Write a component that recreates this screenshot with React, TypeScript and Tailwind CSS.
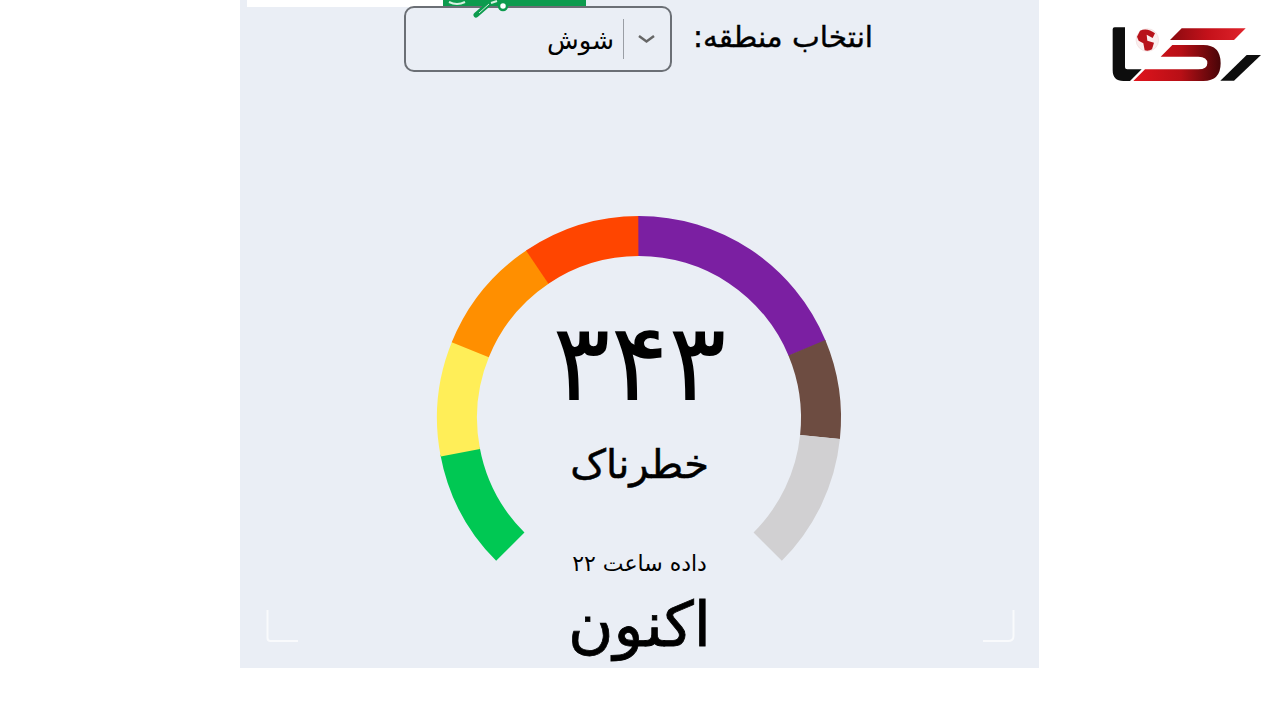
function polar(r: number, a: number) {
  const t = (a * Math.PI) / 180;
  return [639 - 430 + r * Math.sin(t), 418 - 210 - r * Math.cos(t)];
}
function seg(a0: number, a1: number) {
  const R = 202, r = 162;
  const [x0, y0] = polar(R, a0), [x1, y1] = polar(R, a1), [x2, y2] = polar(r, a1), [x3, y3] = polar(r, a0);
  return `M${x0} ${y0}A${R} ${R} 0 0 1 ${x1} ${y1}L${x2} ${y2}A${r} ${r} 0 0 0 ${x3} ${y3}Z`;
}
const segs: [number, number, string][] = [
  [-135, -100.5, "#00c853"],
  [-101, -67.5, "#ffee58"],
  [-68, -33.8, "#ff8f00"],
  [-34, 0, "#ff4500"],
  [-0.2, 67.5, "#7b1fa2"],
  [67.3, 96, "#6d4c41"],
  [96, 135, "#d1d0d2"],
];
const fa = { fontFamily: '"DejaVu Sans", sans-serif' };

export default function App() {
  return (
    <div className="relative w-[1280px] h-[720px] overflow-hidden bg-white">
      <div dir="rtl" style={fa} className="relative ml-[240px] w-[799px] h-[668px] bg-[#eaeef5] text-black">
        <div dir="ltr" className="flex h-[7px] pl-[7px]">
          <div className="w-[196px] bg-white" />
          <div className="w-[143px] bg-[#0d9b4e]" />
        </div>
        <div dir="ltr" className="flex items-center h-[66px] -mt-[1px] pl-[164px]">
          <div className="relative flex items-center w-[268px] h-[66px] rounded-[10px] border-2 border-[#6b6f75]">
            <div className="flex-1 text-right text-[26px] leading-none pt-[2px]" dir="rtl">
              <span className="block pl-[56px]">شوش</span>
            </div>
            <div className="w-px h-[40px] bg-[#9a9ea5] ml-[9px]" />
            <svg width="46" height="20" viewBox="0 0 46 20" fill="none">
              <path d="M15 7l7.500 5.500L30 7" stroke="#666" strokeWidth="2.500" />
            </svg>
          </div>
          <div className="ml-[21px] pb-[2px] text-[29.500px] leading-none whitespace-nowrap [-webkit-text-stroke:0.4px_black]" dir="rtl">انتخاب منطقه:</div>
        </div>

        <div className="flex flex-col items-center mt-[138px]">
          <svg width="420" height="360" viewBox="0 0 420 360" className="shrink-0">
            {segs.map(([a, b, c]) => (
              <path key={c} d={seg(a, b)} fill={c} />
            ))}
          </svg>
          <div className="-mt-[360px] h-[360px] flex flex-col items-center">
            <div className="mt-[98px] h-[110px] text-[108px] leading-[110px] tracking-[2px]">۳۴۳</div>
            <div className="mt-[21px] text-[40px] leading-[50px] [-webkit-text-stroke:0.5px_black]">خطرناک</div>
          </div>
          <div className="-mt-[18px] text-[22px] leading-[24px]">داده ساعت ۲۲</div>
          <div className="mt-[14px] text-[62px] leading-[70px] [-webkit-text-stroke:0.8px_black]">اکنون</div>
        </div>

        <svg className="absolute left-[26px] top-[610px]" width="32" height="33" viewBox="0 0 32 33" fill="none">
          <path d="M1.500 0V28Q1.500 31 4.500 31H32" stroke="#fff" strokeWidth="2" opacity="0.7" />
        </svg>
        <svg className="absolute left-[743px] top-[610px]" width="32" height="33" viewBox="0 0 32 33" fill="none">
          <path d="M30.500 0V26Q30.500 31 25 31H0" stroke="#fff" strokeWidth="2" opacity="0.7" />
        </svg>
        <svg className="absolute left-[203px] top-0" width="143" height="20" viewBox="0 0 143 20" fill="none">
          <path d="M33 15L48 2" stroke="#0d9b4e" strokeWidth="5" strokeLinecap="round" />
          <path d="M36 13L46 4" stroke="#cfeeda" strokeWidth="1" />
          <circle cx="60" cy="6" r="4" stroke="#0d9b4e" strokeWidth="2.500" fill="#fff" />
          <path d="M6 2Q14 6 22 2" stroke="#d9f2e2" strokeWidth="2" />
          <path d="M48 3L54 1" stroke="#d9f2e2" strokeWidth="2" />
        </svg>
      </div>

      <svg className="absolute left-[1090px] top-[10px]" width="190" height="90" viewBox="0 0 570 270">
        <defs>
          <linearGradient id="lg" x1="130" x2="390" y1="0" y2="0" gradientUnits="userSpaceOnUse">
            <stop offset="0" stopColor="#e0141c" />
            <stop offset="0.55" stopColor="#b80f16" />
            <stop offset="1" stopColor="#4a0508" />
          </linearGradient>
          <linearGradient id="lt" x1="240" x2="467" y1="0" y2="0" gradientUnits="userSpaceOnUse">
            <stop offset="0" stopColor="#8a0a10" />
            <stop offset="0.5" stopColor="#c4111a" />
            <stop offset="1" stopColor="#e0232b" />
          </linearGradient>
        </defs>
        <path d="M68 58Q68 52 74 52H105V172Q105 178 112 178H155L120 213H100Q68 213 68 180Z" fill="#0d0d0d" />
        <circle cx="172" cy="90" r="34" fill="#fbeeee" stroke="#e3c5c5" strokeWidth="1" />
        <path d="M150 62Q172 52 195 70L188 84L170 74L172 92L192 98L186 118Q176 124 164 121L160 100L146 92L141 80Z" fill="#b8121a" />
        <path d="M275 55H467L432 90H240Z" fill="url(#lt)" />
        <path d="M247 105H340Q392 105 392 160Q392 213 340 213H130L165 178H325Q352 178 352 160Q352 140 325 140H212Z" fill="url(#lg)" />
        <path d="M470 135H513L432 212H391Z" fill="#0d0d0d" />
      </svg>
    </div>
  );
}
